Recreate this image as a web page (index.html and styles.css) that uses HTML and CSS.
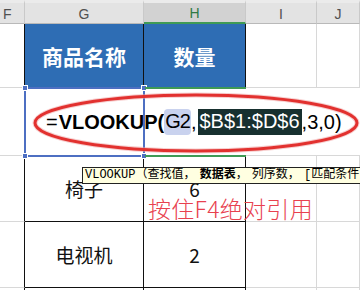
FILE: index.html
```html
<!DOCTYPE html>
<html>
<head>
<meta charset="utf-8">
<link rel="stylesheet" href="styles.css">
</head>
<body>
<div class="sheet">
  <div class="ch">F</div>
  <div class="ch">G</div>
  <div class="ch ch-sel">H</div>
  <div class="ch">I</div>
  <div class="ch">J</div>

  <div class="c c-edge"></div>
  <div class="c c-head">商品名称</div>
  <div class="c c-head">数量</div>
  <div class="c"></div>
  <div class="c"></div>

  <div class="c c-edge"></div>
  <div class="c c-edit">
    <span class="f-eq">=</span><span class="f-fn">VLOOKUP(</span><span class="f-ref">G2</span><span class="f-pl">,</span><span class="f-abs">$B$1:$D$6</span><span class="f-pl">,3,0)</span>
  </div>

  <div class="c c-edge"></div>
  <div class="c c-tb">椅子</div>
  <div class="c c-tb">6</div>
  <div class="c"></div>
  <div class="c"></div>

  <div class="c c-edge"></div>
  <div class="c c-tb">电视机</div>
  <div class="c c-tb">2</div>
  <div class="c"></div>
  <div class="c"></div>

  <div class="c c-edge"></div>
  <div class="c c-tb"></div>
  <div class="c c-tb"></div>
  <div class="c"></div>
  <div class="c"></div>

  <div class="sel-ref">
    <i class="hd hd-tl"></i><i class="hd hd-tr"></i><i class="hd hd-bl"></i><i class="hd hd-br"></i>
  </div>
  <div class="sel-act"></div>

  <svg class="ring" width="360" height="80" viewBox="0 0 360 80">
    <ellipse cx="196" cy="40" rx="161" ry="28" fill="none" stroke="#f0a0a0" stroke-width="5" opacity="0.5"/>
    <ellipse cx="196" cy="40" rx="161" ry="28" fill="none" stroke="#e2312f" stroke-width="3"/>
  </svg>

  <div class="tip">VLOOKUP（查找值， <b>数据表</b>， 列序数， [匹配条件]）</div>
  <div class="note">按住F4绝对引用</div>
</div>
</body>
</html>
```

FILE: styles.css
```css
* { box-sizing: border-box; }
html, body { margin: 0; padding: 0; background: #fff; }
body { width: 360px; height: 290px; overflow: hidden; }

.sheet {
  position: relative;
  display: grid;
  grid-template-columns: 25px 119px 102px 71px 43px;
  grid-template-rows: 24px 64px 68px 66px 66px 12px;
  font-family: "Noto Sans CJK SC", "Noto Sans", sans-serif;
  color: #111;
  overflow: hidden;
  width: 360px;
  height: 290px;
}

.ch {
  background: #e3e3e3;
  border-top: 3px solid #ebebeb;
  border-right: 1px solid #c9c9c9;
  border-bottom: 1px solid #b9b9b9;
  display: flex;
  align-items: center;
  justify-content: center;
  font-family: "Liberation Sans", "Noto Sans", sans-serif;
  font-size: 14px;
  color: #505050;
  padding-top: 1px;
}
.ch:first-child { justify-content: flex-start; padding-left: 3px; }
.ch-sel {
  background: #d2d2d2;
  border-bottom: 2px solid #3f9a55;
  color: #2f7a45;
}

.c {
  border-right: 1px solid #d8d8d8;
  border-bottom: 1px solid #d8d8d8;
  display: flex;
  align-items: center;
  justify-content: center;
  font-size: 19px;
}
.c-edge { border-right: 1px solid #111; }
.c-head {
  background: #2e6db4;
  color: #fff;
  font-weight: 700;
  font-size: 21px;
  border-right: 1px solid #111;
  border-bottom: 1px solid #2e6db4;
}
.c-tb {
  border-right: 1px solid #111;
  border-bottom: 1px solid #111;
}
.c-edit {
  grid-column: 2 / span 4;
  justify-content: flex-start;
  padding-left: 21px;
  padding-top: 1px;
  white-space: nowrap;
  font-family: "Liberation Sans", "Noto Sans", sans-serif;
  font-size: 20px;
  color: #000;
  border-right: none;
}
.f-fn { font-weight: 700; }
.f-eq { margin-right: 1px; }
.f-ref {
  background: #c9d2ee;
  border-radius: 4px;
  padding: 1px 1px 2px;
  letter-spacing: -1px;
}
.f-pl { color: #000; }
.f-abs {
  background: #17302f;
  color: #fff;
  padding: 1px 2px 2px;
  margin-left: 1px;
}

.sel-ref {
  position: absolute;
  left: 24px; top: 87px;
  width: 121px; height: 70px;
  border: 2px solid #4d6fc2;
}
.hd {
  position: absolute;
  width: 6px; height: 6px;
  background: #4d6fc2;
  border: 1px solid #fff;
}
.hd-tl { left: -4px; top: -4px; }
.hd-tr { right: -4px; top: -4px; }
.hd-bl { left: -4px; bottom: -4px; }
.hd-br { right: -4px; bottom: -4px; }

.sel-act {
  position: absolute;
  left: 145px; top: 87px;
  width: 101px; height: 70px;
  border-top: 2px solid #3f9a55;
  border-bottom: 2px solid #3f9a55;
}

.ring {
  position: absolute;
  left: 0; top: 83px;
}

.tip {
  position: absolute;
  left: 82px; top: 167px;
  width: 300px; height: 17px;
  background: #ffffe1;
  border: 1px solid #222;
  font-family: "Liberation Mono", "Noto Sans CJK SC", monospace;
  font-size: 12px;
  line-height: 15px;
  padding-left: 2px;
  white-space: pre;
  word-spacing: -3px;
  overflow: hidden;
  color: #000;
}
.tip b { font-weight: 700; }

.note {
  position: absolute;
  left: 148px; top: 194px;
  font-family: "Noto Sans CJK SC", sans-serif;
  font-weight: 300;
  font-size: 23px;
  line-height: 28px;
  letter-spacing: 0.3px;
  color: #e8414f;
  white-space: nowrap;
}
```
